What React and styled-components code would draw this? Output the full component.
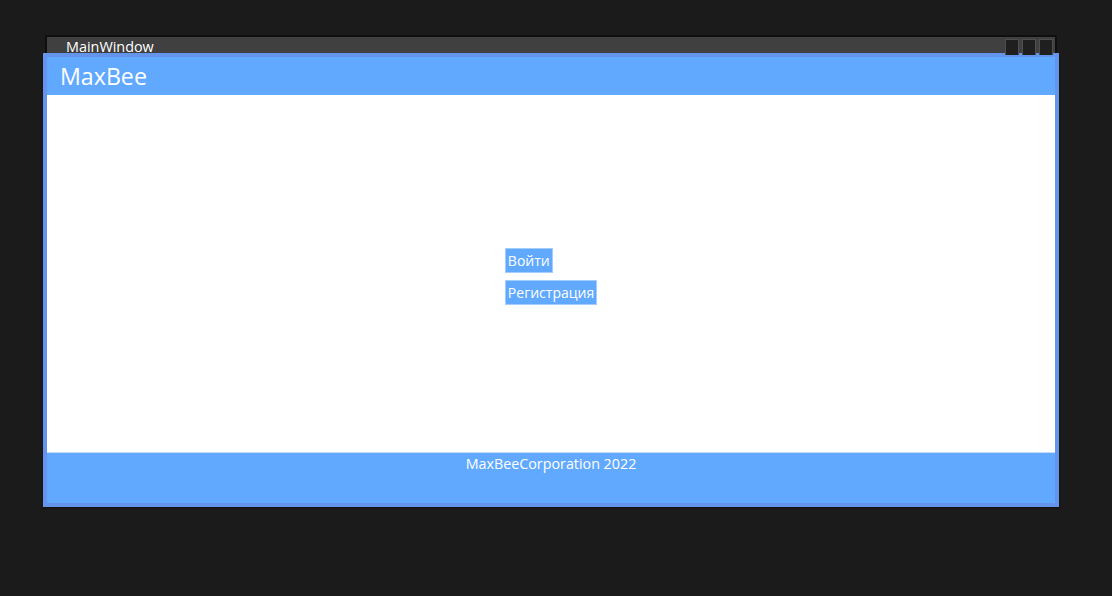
import React from 'react'
import styled, { createGlobalStyle } from 'styled-components'

const GlobalStyle = createGlobalStyle`
  html, body {
    margin: 0;
    padding: 0;
    background: #1b1b1b;
  }
  body {
    font-family: "Open Sans", "Noto Sans", "Liberation Sans", sans-serif;
  }
`;

const Desktop = styled.div`
  width: 1112px;
  height: 596px;
  padding: 35px 0 0 45px;
  box-sizing: border-box;
`;

const Window = styled.div`
  width: 1012px;
  background: #404040;
  border: 2px solid #0f0f0f;
  border-bottom: none;
  box-sizing: border-box;
`;

const TitleBar = styled.div`
  height: 16px;
  display: flex;
  align-items: flex-start;
  justify-content: space-between;
  padding-left: 19px;
`;

const TitleText = styled.span`
  color: #ffffff;
  font-size: 14.4px;
  line-height: 18px;
  margin-top: 1px;
`;

const Controls = styled.div`
  display: flex;
  gap: 3px;
  padding: 2px 2px 0 0;
`;

const ControlBox = styled.div`
  width: 14px;
  height: 16px;
  box-sizing: border-box;
  background: #1f1f1f;
  border: 1px solid #4e4e4e;
  border-bottom: none;
`;

const Frame = styled.div`
  margin: 0 -4px;
  border: 4px solid #6594ec;
  display: flex;
  flex-direction: column;
  background: #60a9ff;
  box-shadow: 0 1px 2px rgba(0, 0, 0, 0.4);
`;

const Header = styled.div`
  height: 38px;
  display: flex;
  align-items: center;
  padding-left: 13px;
  color: #ffffff;
  font-size: 23.2px;
`;

const Content = styled.div`
  height: 357px;
  background: #ffffff;
  display: flex;
  align-items: center;
  justify-content: center;
  padding-top: 6px;
  box-sizing: border-box;
`;

const ButtonStack = styled.div`
  display: flex;
  flex-direction: column;
  align-items: flex-start;
  gap: 7px;
`;

const Button = styled.button`
  height: 25px;
  padding: 0 2px;
  background: #60a9ff;
  border: 1px solid #a4cdff;
  color: #ffffff;
  font-family: "Open Sans", "Noto Sans", "Liberation Sans", sans-serif;
  font-size: 14px;
  line-height: 20px;
  cursor: pointer;
`;

const Footer = styled.div`
  height: 51px;
  border-top: 1px solid #c4dcf6;
  box-sizing: border-box;
  display: flex;
  justify-content: center;
  color: #ffffff;
  font-size: 14.3px;
  line-height: 22px;
`;

export default function App() {
  return (
    <>
      <GlobalStyle />
      <Desktop>
        <Window>
          <TitleBar>
            <TitleText>MainWindow</TitleText>
            <Controls>
              <ControlBox />
              <ControlBox />
              <ControlBox />
            </Controls>
          </TitleBar>
          <Frame>
            <Header>MaxBee</Header>
            <Content>
              <ButtonStack>
                <Button>Войти</Button>
                <Button>Регистрация</Button>
              </ButtonStack>
            </Content>
            <Footer>MaxBeeCorporation 2022</Footer>
          </Frame>
        </Window>
      </Desktop>
    </>
  )
}
